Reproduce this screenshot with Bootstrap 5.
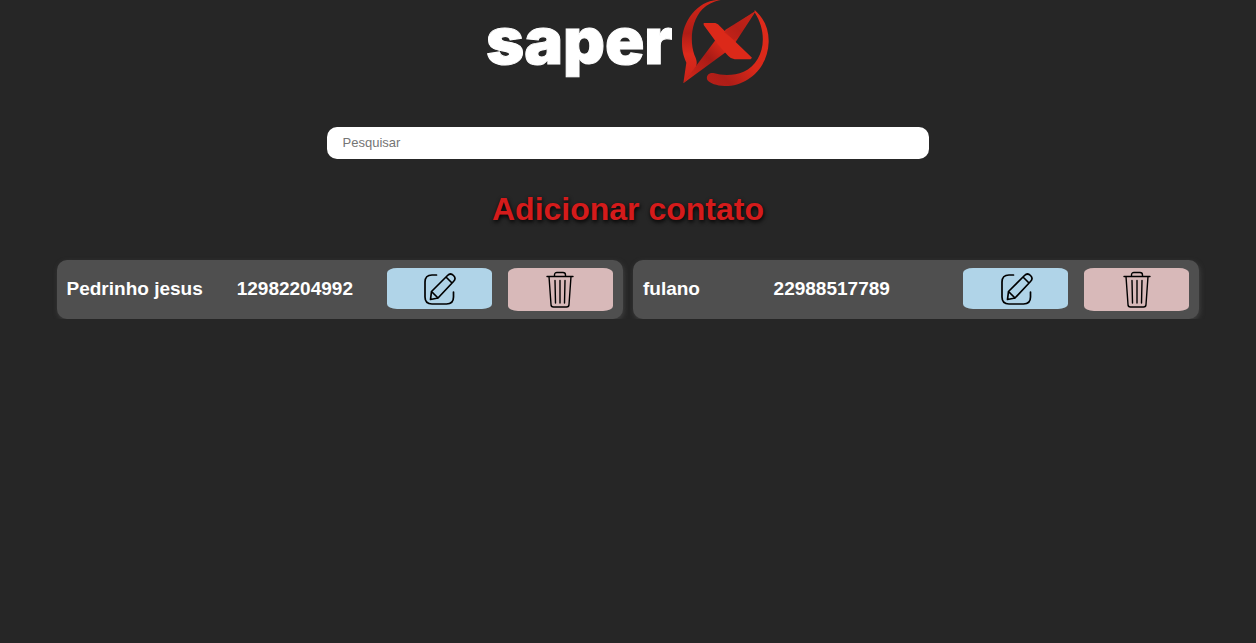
<!DOCTYPE html>
<html lang="pt-BR">
<head>
<meta charset="utf-8">
<meta name="viewport" content="width=device-width, initial-scale=1">
<title>SaperX - Contatos</title>
<link href="https://cdn.jsdelivr.net/npm/bootstrap@5.3.0/dist/css/bootstrap.min.css" rel="stylesheet">
<style>
  body { background: #262626; color: #fff; font-family: "Liberation Sans", Arial, sans-serif; }
  .brand-logo { width: 284px; height: 87px; overflow: visible; }
  .brand-word { font: 900 65px Inter, sans-serif; fill: #fff; stroke: #fff; stroke-width: 1px; }
  .search-form { width: 48%; min-width: 260px; margin-top: 40px; }
  .search-box { height: 32px; padding: 0 16px 2px; border: 0; border-radius: 10px; font-size: 13px; line-height: 20px; }
  .search-box::placeholder { color: #757575; }
  .add-title { margin: 31px 0 32px; font-size: 32px; line-height: 38px; font-weight: 700; }
  .add-title a { color: #d41b1b; text-shadow: 1px 2px 4px #000; }
  .contacts { width: 91%; gap: 10px; }
  .contact { background: #4f4f4f; border-radius: 10px; padding: 8px 10px; box-shadow: 1px 2px 5px #404040; }
  .contact-text { font-size: 19px; line-height: 24px; font-weight: 700; padding-bottom: 2px; }
  .action { width: 105px; height: 41px; border-radius: 10px / 5px; }
  .action-edit { background: #b0d4e8; }
  .action-delete { background: #d8b9b9; height: 43px; }
  .action svg { display: block; fill: none; stroke: #000; stroke-linecap: round; stroke-linejoin: round; }
</style>
</head>
<body>
<svg class="d-none" aria-hidden="true">
  <symbol id="icon-edit" viewBox="0 0 36 36">
    <path stroke-width="1.7" d="M15.500 4H11Q4 4 4 11V26Q4 33 11 33H25.500Q32.500 33 32.500 26V21"/>
    <path stroke-width="1.7" d="M9.500 28.500L10.500 20.500 26.500 4.500Q29.500 1.500 32.500 4.500T32.500 10.500L17 27Z M10.500 20.500L17 27 M25 6L31 12"/>
  </symbol>
  <symbol id="icon-trash" viewBox="0 0 30 38">
    <path stroke-width="1.4" d="M2 5.500H28M9.500 5.500V4Q9.500 1.500 12 1.500H18Q20.500 1.500 20.500 4V5.500M4 5.500L6 33.500Q6 36 8.500 36H21.500Q24 36 24 33.500L26 5.500"/>
    <path stroke-width="1.4" d="M10 9.500L10.500 32M15 9.500V32M20 9.500L19.500 32"/>
  </symbol>
</svg>

<header class="d-flex justify-content-center">
  <svg class="brand-logo" viewBox="0 0 284 87" role="img" aria-label="saper X">
    <defs>
      <linearGradient id="arc" x1="0" y1="0" x2="0" y2="1">
        <stop offset="0" stop-color="#d42518"/><stop offset=".4" stop-color="#b01d16"/><stop offset=".65" stop-color="#dc2a1c"/><stop offset="1" stop-color="#c92218"/>
      </linearGradient>
      <linearGradient id="sweep" x1="1" y1="0" x2="0" y2="1">
        <stop offset="0" stop-color="#e02b1b"/><stop offset=".5" stop-color="#d92819"/><stop offset=".8" stop-color="#ad1d17"/><stop offset="1" stop-color="#b81f18"/>
      </linearGradient>
      <linearGradient id="blade" gradientUnits="userSpaceOnUse" x1="25" y1="250" x2="243" y2="32">
        <stop offset="0" stop-color="#d92819"/><stop offset=".35" stop-color="#a81b16"/><stop offset=".55" stop-color="#dc2919"/><stop offset=".75" stop-color="#b51f17"/><stop offset="1" stop-color="#d92819"/>
      </linearGradient>
    </defs>
    <text class="brand-word" x="0" y="64">saper</text>
    <g transform="translate(189 0) scale(.3333)">
      <path fill="url(#arc)" d="M137 0C75-4 20 58 21 130C21 156 28 174 34 188L25 250L62 204C68 190 65 178 58 164C44 125 48 64 82 28C98 12 116 4 137 0Z"/>
      <path fill="url(#sweep)" d="M239 30C268 55 282 88 281 126C279 205 216 259 149 258C124 257 105 250 97 240C92 228 101 218 115 219C145 228 178 227 206 215C262 190 285 110 239 37Z"/>
      <path fill="url(#blade)" d="M243 32L182 126L150 158L25 250L72 186L121 121L154 88Z"/>
      <path fill="#dc2919" d="M86 69H121Q130 71 135 79L182 126L231 173L227 178H179Q168 177 160 168L130 135L86 75Z"/>
      <path fill="#b51f17" opacity=".5" d="M148 97L240 34L192 108L176 119Z"/>
    </g>
  </svg>
</header>

<main class="d-flex flex-column align-items-center">
  <form class="search-form" role="search">
    <input class="search-box form-control" type="text" placeholder="Pesquisar" aria-label="Pesquisar">
  </form>

  <h1 class="add-title text-center"><a class="text-decoration-none" href="#">Adicionar contato</a></h1>

  <section class="contacts row row-cols-1 row-cols-lg-2 flex-lg-nowrap g-0" aria-label="Contatos">
    <article class="contact col flex-lg-fill d-flex flex-wrap justify-content-between align-items-center">
      <span class="contact-text">Pedrinho jesus</span>
      <span class="contact-text">12982204992</span>
      <div class="d-flex gap-3">
        <button class="action action-edit btn border-0 p-0 d-flex align-items-center justify-content-center" type="button" aria-label="Editar Pedrinho jesus"><svg width="36" height="36"><use href="#icon-edit"/></svg></button>
        <button class="action action-delete btn border-0 p-0 d-flex align-items-center justify-content-center" type="button" aria-label="Excluir Pedrinho jesus"><svg width="30" height="38"><use href="#icon-trash"/></svg></button>
      </div>
    </article>
    <article class="contact col flex-lg-fill d-flex flex-wrap justify-content-between align-items-center">
      <span class="contact-text">fulano</span>
      <span class="contact-text">22988517789</span>
      <div class="d-flex gap-3">
        <button class="action action-edit btn border-0 p-0 d-flex align-items-center justify-content-center" type="button" aria-label="Editar fulano"><svg width="36" height="36"><use href="#icon-edit"/></svg></button>
        <button class="action action-delete btn border-0 p-0 d-flex align-items-center justify-content-center" type="button" aria-label="Excluir fulano"><svg width="30" height="38"><use href="#icon-trash"/></svg></button>
      </div>
    </article>
  </section>
</main>

<script src="https://cdn.jsdelivr.net/npm/bootstrap@5.3.0/dist/js/bootstrap.bundle.min.js"></script>
</body>
</html>
